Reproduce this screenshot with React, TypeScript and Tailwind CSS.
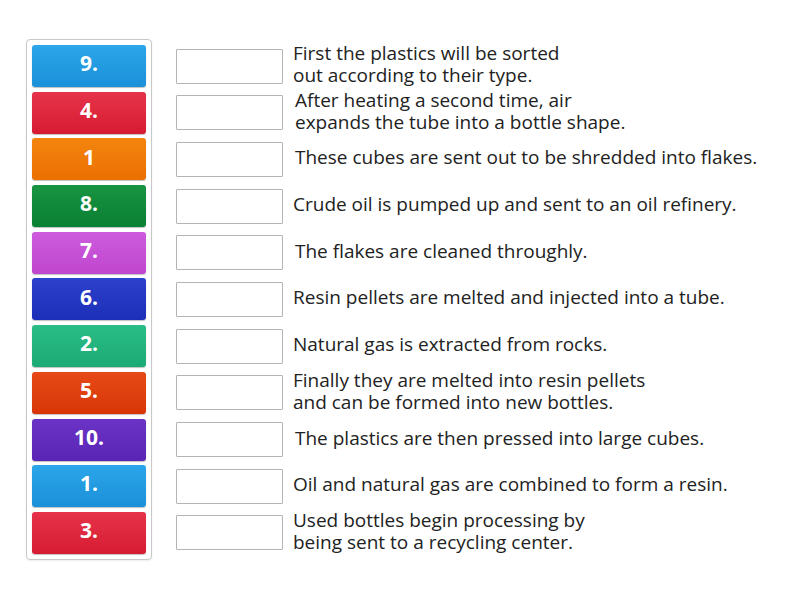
const tiles = [
  { label: "9.", from: "from-[#2ba6ea]", to: "to-[#1a90d8]" },
  { label: "4.", from: "from-[#e6334a]", to: "to-[#d61a31]" },
  { label: "1", from: "from-[#f4850f]", to: "to-[#ea7000]" },
  { label: "8.", from: "from-[#179442]", to: "to-[#0a8032]" },
  { label: "7.", from: "from-[#cd5bdc]", to: "to-[#bf46cf]" },
  { label: "6.", from: "from-[#2b40cc]", to: "to-[#1c2fb8]" },
  { label: "2.", from: "from-[#2bbd86]", to: "to-[#1aab75]" },
  { label: "5.", from: "from-[#e74a16]", to: "to-[#d83506]" },
  { label: "10.", from: "from-[#6a33c6]", to: "to-[#5a24b5]" },
  { label: "1.", from: "from-[#2ba6ea]", to: "to-[#1a90d8]" },
  { label: "3.", from: "from-[#e6334a]", to: "to-[#d61a31]" },
];

const sentences = [
  { text: ["First the plastics will be sorted", "out according to their type."], shift: false },
  { text: ["After heating a second time, air", "expands the tube into a bottle shape."], shift: true },
  { text: ["These cubes are sent out to be shredded into flakes."], shift: true },
  { text: ["Crude oil is pumped up and sent to an oil refinery."], shift: false },
  { text: ["The flakes are cleaned throughly."], shift: true },
  { text: ["Resin pellets are melted and injected into a tube."], shift: false },
  { text: ["Natural gas is extracted from rocks."], shift: false },
  { text: ["Finally they are melted into resin pellets", "and can be formed into new bottles."], shift: false },
  { text: ["The plastics are then pressed into large cubes."], shift: true },
  { text: ["Oil and natural gas are combined to form a resin."], shift: false },
  { text: ["Used bottles begin processing by", "being sent to a recycling center."], shift: false },
];

export default function App() {
  return (
    <div className="w-[800px] h-[600px] bg-white font-['Open_Sans',sans-serif] pt-[39px] pl-[26px] flex gap-[24px] items-start">
      {/* draggable tiles */}
      <div className="w-[126px] border border-[#c8c8c8] rounded-[4px] p-[5px] flex flex-col gap-[4.7px] shadow-[0_1px_2px_rgba(0,0,0,0.08)]">
        {tiles.map((t, i) => (
          <div
            key={i}
            className={`h-[42px] rounded-[3px] bg-linear-to-b ${t.from} ${t.to} shadow-[0_1px_1px_rgba(0,0,0,0.25)] flex items-center justify-center pb-[4px] text-white font-bold text-[21px]`}
          >
            {t.label}
          </div>
        ))}
      </div>

      {/* targets */}
      <div className="pt-[6px] flex flex-col gap-[4.7px]">
        {sentences.map((s, i) => (
          <div key={i} className="h-[42px] flex items-center">
            <div className="w-[107px] h-[35px] border border-[#b4b4b4] rounded-[1px] bg-white shrink-0" />
            <div className={`${s.shift ? "pl-[12px]" : "pl-[10px]"} -mt-[4px] text-[19px] leading-[22px] text-[#222]`}>
              {s.text.map((line, j) => (
                <div key={j} className="whitespace-nowrap">{line}</div>
              ))}
            </div>
          </div>
        ))}
      </div>
    </div>
  );
}
